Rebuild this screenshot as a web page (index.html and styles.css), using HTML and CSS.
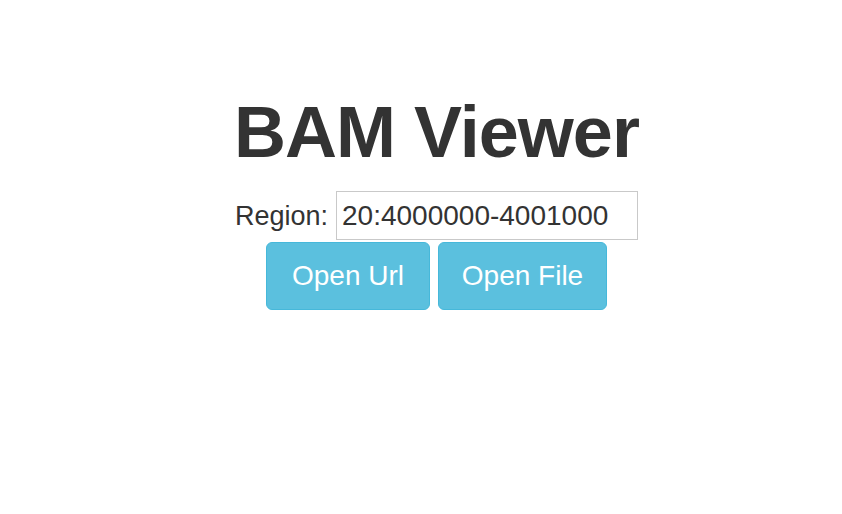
FILE: index.html
```html
<!DOCTYPE html>
<html>
<head>
<meta charset="utf-8">
<link rel="stylesheet" href="styles.css">
</head>
<body>
<div class="page">
  <h1 class="title">BAM Viewer</h1>
  <div class="region-row">
    <label class="region-label" for="region">Region:</label>
    <input class="region-input" id="region" type="text" value="20:4000000-4001000">
  </div>
  <div class="buttons">
    <button class="btn">Open Url</button>
    <button class="btn btn-file">Open File</button>
  </div>
</div>
</body>
</html>
```
FILE: styles.css
```css
html, body {
  margin: 0;
  padding: 0;
  background: #fff;
}
body {
  font-family: "Liberation Sans", Arial, Helvetica, sans-serif;
  color: #333;
}
.page {
  display: flex;
  flex-direction: column;
  align-items: center;
  padding-top: 92px;
  padding-left: 31px;
}
.title {
  margin: 0;
  font-size: 72px;
  line-height: 80px;
  letter-spacing: -1px;
  font-weight: bold;
  color: #333;
}
.region-row {
  display: flex;
  align-items: baseline;
  gap: 8px;
  margin-top: 19px;
}
.region-label {
  font-size: 27px;
  color: #333;
}
.region-input {
  box-sizing: border-box;
  width: 302px;
  height: 49px;
  padding: 0 5px;
  border: 1px solid #c9c9c9;
  font-family: "Liberation Sans", Arial, Helvetica, sans-serif;
  font-size: 28px;
  color: #333;
  outline: none;
}
.buttons {
  display: flex;
  gap: 8px;
  margin-top: 2px;
}
.btn {
  box-sizing: border-box;
  height: 68px;
  width: 164px;
  padding: 0;
  border: 1px solid #46b8da;
  border-radius: 6px;
  background: #5bc0de;
  color: #fff;
  font-family: "Liberation Sans", Arial, Helvetica, sans-serif;
  font-size: 28px;
  line-height: 40px;
}
.btn-file {
  width: 169px;
}
```
